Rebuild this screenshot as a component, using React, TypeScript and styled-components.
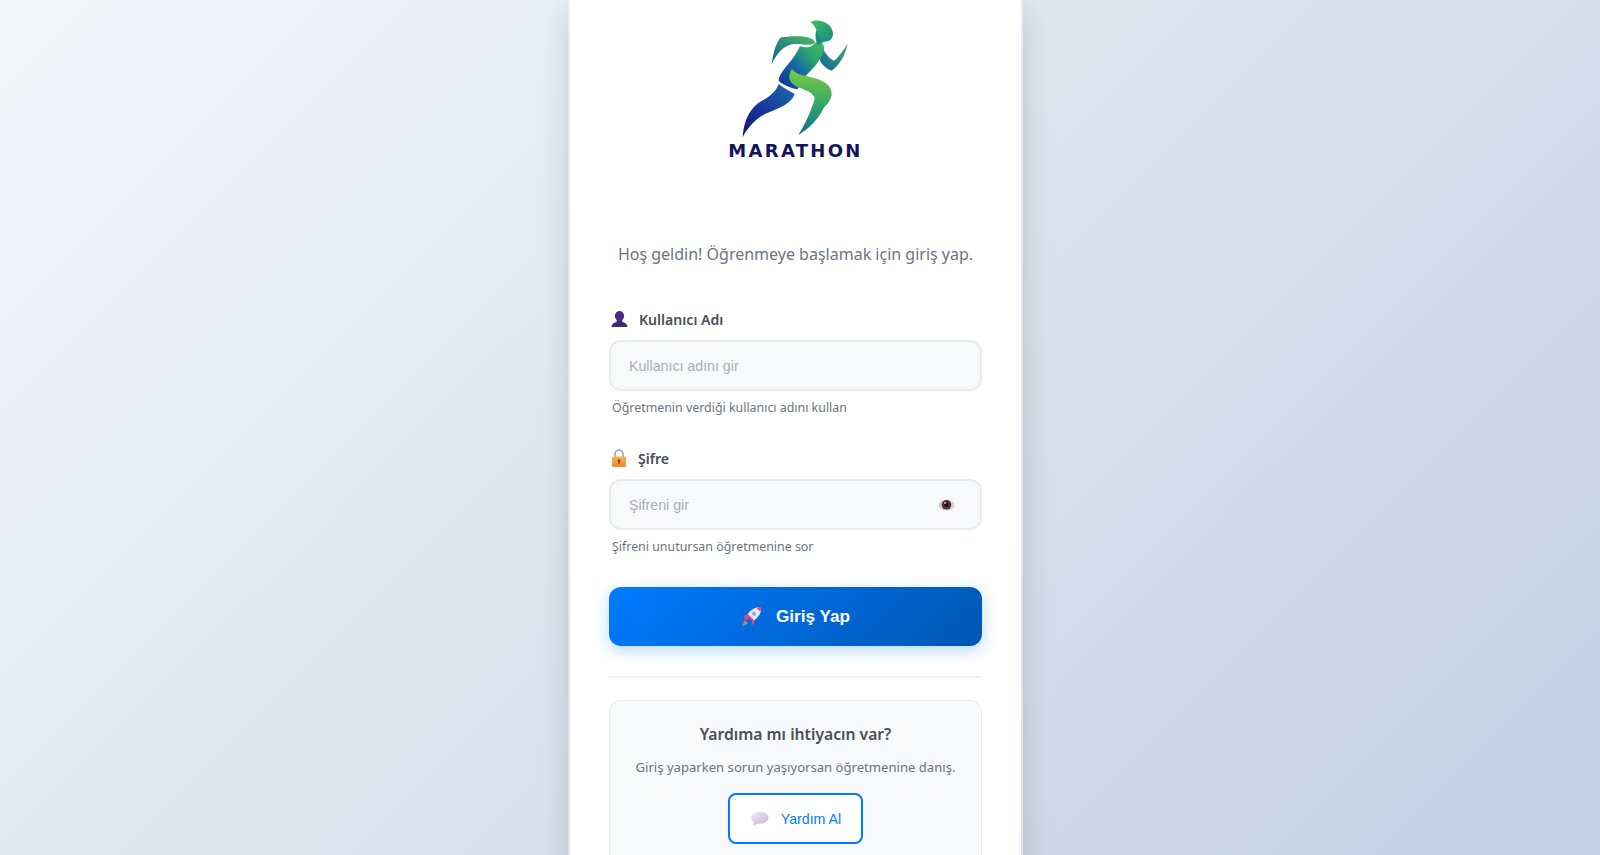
import React from 'react';
import styled, { createGlobalStyle } from 'styled-components';

const GlobalStyle = createGlobalStyle`
  html, body {
    margin: 0;
    height: 100%;
    overflow: hidden;
  }
  * {
    box-sizing: border-box;
  }
`;

const Page = styled.div`
  height: 100vh;
  display: flex;
  justify-content: center;
  padding-right: 9px;
  background: linear-gradient(135deg, #f5f7fa 0%, #c3cfe2 100%);
  overflow: hidden;
`;

const Card = styled.main`
  width: 451px;
  flex: none;
  height: 900px;
  padding: 0 39px;
  background: #fff;
  box-shadow: 0 0 0 2px rgba(255, 255, 255, 0.45), 0 10px 30px rgba(0, 0, 0, 0.16);
  font-family: 'Noto Sans', 'Open Sans', sans-serif;
`;

const LogoWrap = styled.div`
  position: relative;
  height: 180px;
  display: flex;
  justify-content: center;
  padding-left: 8px;
`;

const LogoText = styled.span`
  position: absolute;
  left: 0;
  right: 0;
  top: 140px;
  text-align: center;
  font-family: 'DejaVu Sans', 'Liberation Sans', sans-serif;
  font-weight: 700;
  font-size: 18px;
  line-height: 22px;
  letter-spacing: 2.3px;
  color: #14145e;
`;

const Subtitle = styled.p`
  margin: 62px 0 0;
  text-align: center;
  font-size: 16px;
  line-height: 24px;
  color: #6c757d;
  white-space: nowrap;
`;

const Field = styled.div`
  margin-top: ${(props: { $top: number }) => props.$top}px;
`;

const Label = styled.label`
  display: flex;
  align-items: center;
  gap: 11px;
  height: 20px;
  margin: 0 0 11px 2px;
  font-size: 14.1px;
  font-weight: 600;
  color: #495057;
`;

const InputWrap = styled.div`
  position: relative;
`;

const Input = styled.input`
  display: block;
  width: 100%;
  height: 51px;
  padding: 0 18px;
  background: #f8f9fa;
  border: 2px solid #e9ecef;
  border-radius: 12px;
  outline: none;
  font-family: 'Liberation Sans', Arial, sans-serif;
  font-size: 14.2px;

  &::placeholder {
    color: #a9afb6;
    opacity: 1;
  }
`;

const EyeButton = styled.span`
  position: absolute;
  right: 27px;
  top: 19px;
  display: flex;
`;

const Hint = styled.div`
  margin: 8px 0 0 3px;
  height: 18px;
  font-size: 12.4px;
  line-height: 18px;
  color: #6c757d;
`;

const SubmitButton = styled.button`
  width: 100%;
  height: 59px;
  margin-top: 31px;
  display: flex;
  align-items: center;
  justify-content: center;
  gap: 14px;
  border: none;
  border-radius: 12px;
  background: linear-gradient(135deg, #007bff 0%, #0056b3 100%);
  box-shadow: 0 4px 15px rgba(0, 123, 255, 0.3);
  font-family: 'Liberation Sans', Arial, sans-serif;
  font-size: 17.2px;
  font-weight: 700;
  color: #fff;
`;

const Divider = styled.hr`
  margin: 30px 0 22px;
  height: 2px;
  border: none;
  background: #f1f3f5;
`;

const HelpBox = styled.section`
  height: 200px;
  padding: 22px 10px;
  background: #f8f9fa;
  border: 1px solid #e9ecef;
  border-radius: 12px;
  text-align: center;
`;

const HelpTitle = styled.h3`
  margin: 0;
  font-size: 15.7px;
  line-height: 22px;
  font-weight: 600;
  color: #495057;
`;

const HelpText = styled.p`
  margin: 11px 0 0;
  font-size: 13.1px;
  line-height: 22px;
  color: #6c757d;
  white-space: nowrap;
`;

const HelpButton = styled.button`
  width: 135px;
  height: 51px;
  margin-top: 15px;
  display: inline-flex;
  align-items: center;
  justify-content: center;
  gap: 12px;
  background: #fff;
  border: 2px solid #007bff;
  border-radius: 8px;
  font-family: 'Liberation Sans', Arial, sans-serif;
  font-size: 14.2px;
  color: #007bff;
`;

const Soft = styled.svg`
  flex: none;
  filter: blur(0.3px);
`;

const RunnerLogo = () => (
  <Soft width="240" height="180" viewBox="0 0 720 540">
    <defs>
      <linearGradient id="head" x1="0" y1="0" x2="1" y2="1">
        <stop offset="0" stopColor="#46bb64" />
        <stop offset="1" stopColor="#0f8d80" />
      </linearGradient>
      <linearGradient id="arm" x1="1" y1="0" x2="0" y2="1">
        <stop offset="0" stopColor="#4fbc60" />
        <stop offset="1" stopColor="#0f5f9a" />
      </linearGradient>
      <linearGradient id="torso" x1="0" y1="1" x2="1" y2="0">
        <stop offset="0" stopColor="#15309b" />
        <stop offset="0.42" stopColor="#1466a4" />
        <stop offset="0.72" stopColor="#2fa96c" />
        <stop offset="1" stopColor="#46b866" />
      </linearGradient>
      <linearGradient id="thigh" x1="0" y1="0" x2="0" y2="1">
        <stop offset="0" stopColor="#7ecb3e" />
        <stop offset="0.5" stopColor="#36ab68" />
        <stop offset="1" stopColor="#0f6f92" />
      </linearGradient>
      <linearGradient id="backleg" x1="1" y1="0" x2="0" y2="1">
        <stop offset="0" stopColor="#1a6fa8" />
        <stop offset="0.6" stopColor="#17309a" />
        <stop offset="1" stopColor="#141a6a" />
      </linearGradient>
      <linearGradient id="hand" x1="1" y1="0" x2="0" y2="1">
        <stop offset="0" stopColor="#3cb46a" />
        <stop offset="1" stopColor="#125f9e" />
      </linearGradient>
    </defs>
    {/* back arm */}
    <path fill="url(#arm)" d="M406 128C400 106 350 106 303 112C288 126 280 160 275 192C290 162 308 138 340 132C364 130 392 140 406 128Z" />
    {/* front arm */}
    <path fill="url(#hand)" d="M430 148C440 166 450 178 462 182C476 172 490 150 503 132C498 160 480 195 455 212C438 206 420 192 416 168Z" />
    {/* torso */}
    <path fill="url(#torso)" d="M360 138C376 146 398 142 412 122C426 124 434 136 432 148C424 178 402 206 376 228L352 268C330 262 310 256 296 242C298 212 338 188 360 138Z" />
    {/* head */}
    <path fill="url(#head)" d="M392 66C416 54 458 68 459 102C459 118 446 127 430 125C418 122 414 104 410 92C406 80 400 72 392 66Z" />
    <path fill="#148f7c" d="M410 90C416 102 420 120 432 125L414 134C406 120 404 104 410 90Z" />
    {/* back leg */}
    <path fill="url(#backleg)" d="M296 252C316 268 332 274 344 282C332 318 276 330 244 348C218 366 200 388 188 412C190 368 206 330 236 308C264 292 284 282 296 252Z" />
    {/* front leg */}
    <path fill="url(#thigh)" d="M336 206C350 232 404 224 438 250C466 274 456 302 432 322C418 354 388 386 355 405C376 370 394 332 404 296C404 282 382 272 360 264C328 252 320 232 336 206Z" />
  </Soft>
);

const UserIcon = () => (
  <Soft width="17" height="17" viewBox="0 0 17 17">
    <ellipse cx="8.5" cy="5" rx="4.6" ry="5" fill="#4b2a82" />
    <path fill="#3f2a78" d="M6 8.5h5l.5 2.5c2.4.6 4.5 1.6 5 5H.5c.5-3.4 2.6-4.4 5-5z" />
  </Soft>
);

const LockIcon = () => (
  <Soft width="16" height="19" viewBox="0 0 16 19">
    <defs>
      <linearGradient id="lock" x1="0" y1="0" x2="0" y2="1">
        <stop offset="0" stopColor="#fbb24e" />
        <stop offset="1" stopColor="#f08a2c" />
      </linearGradient>
    </defs>
    <path fill="none" stroke="#a7adb8" strokeWidth="1.8" d="M4 8V5.2a4 4 0 0 1 8 0V8" />
    <rect x="1" y="7.5" width="14" height="10.5" rx="1.5" fill="url(#lock)" />
    <circle cx="8" cy="11.6" r="1.3" fill="#6b4210" />
    <rect x="7.4" y="12" width="1.2" height="3.2" fill="#6b4210" />
  </Soft>
);

const EyeIcon = () => (
  <Soft width="17" height="14" viewBox="0 0 17 14">
    <ellipse cx="8.5" cy="7.2" rx="8" ry="5.4" fill="#d5ced9" />
    <circle cx="8.5" cy="6.8" r="4.8" fill="#5c2a30" />
    <circle cx="8.5" cy="6.8" r="2.3" fill="#1d1014" />
    <circle cx="7" cy="5" r="0.9" fill="#e9d5d8" />
  </Soft>
);

const RocketIcon = () => (
  <Soft width="21" height="21" viewBox="0 0 21 21">
    <path fill="#c98a5a" d="M3.5 14 7 17.5 1.5 20z" />
    <path fill="#f0417a" d="M3.5 9.5 8 7.5l-1 6-3.2.6zM11.5 14l2.5-1.5-.8 4.6-2.9 3z" />
    <path fill="#eae8f3" d="M20 1c.6 5-1.8 9.6-7 13.4L6.6 8C10.4 3 15 .6 20 1z" />
    <path fill="#f0417a" d="M20 1c.2 1.6 0 3.2-.6 4.7L15.4 2c1.5-.7 3-1.1 4.6-1zM6.6 8l6.4 6.4-1.4 1-6.2-6.2z" />
    <circle cx="13" cy="7.8" r="2" fill="#8fa6d8" />
  </Soft>
);

const BubbleIcon = () => (
  <Soft width="19" height="15" viewBox="0 0 19 15">
    <defs>
      <linearGradient id="bubble" x1="0" y1="0" x2="1" y2="1">
        <stop offset="0" stopColor="#f1edf7" />
        <stop offset="1" stopColor="#c5b8dc" />
      </linearGradient>
    </defs>
    <ellipse cx="9.7" cy="6.6" rx="8.8" ry="6.2" fill="url(#bubble)" />
    <path fill="#cdc2e0" d="M4 10.5 3.6 14.6 8.5 12z" />
  </Soft>
);

const App = () => {
  return (
    <Page>
      <GlobalStyle />
      <Card>
        <LogoWrap>
          <RunnerLogo />
          <LogoText>MARATHON</LogoText>
        </LogoWrap>

        <Subtitle>Hoş geldin! Öğrenmeye başlamak için giriş yap.</Subtitle>

        <Field $top={43}>
          <Label>
            <UserIcon />
            Kullanıcı Adı
          </Label>
          <Input placeholder="Kullanıcı adını gir" />
          <Hint>Öğretmenin verdiği kullanıcı adını kullan</Hint>
        </Field>

        <Field $top={31}>
          <Label>
            <LockIcon />
            Şifre
          </Label>
          <InputWrap>
            <Input placeholder="Şifreni gir" />
            <EyeButton>
              <EyeIcon />
            </EyeButton>
          </InputWrap>
          <Hint>Şifreni unutursan öğretmenine sor</Hint>
        </Field>

        <SubmitButton>
          <RocketIcon />
          Giriş Yap
        </SubmitButton>

        <Divider />

        <HelpBox>
          <HelpTitle>Yardıma mı ihtiyacın var?</HelpTitle>
          <HelpText>Giriş yaparken sorun yaşıyorsan öğretmenine danış.</HelpText>
          <HelpButton>
            <BubbleIcon />
            Yardım Al
          </HelpButton>
        </HelpBox>
      </Card>
    </Page>
  );
};

export default App;
